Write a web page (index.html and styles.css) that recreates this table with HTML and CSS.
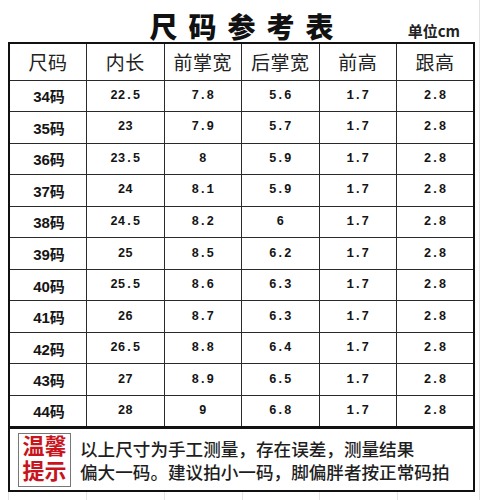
FILE: index.html
```html
<!DOCTYPE html>
<html lang="zh-CN">
<head>
<meta charset="utf-8">
<title>尺码参考表</title>
<link rel="stylesheet" href="styles.css">
</head>
<body>
<div class="page">
  <div class="sheet">
    <div class="title-bar">
      <span></span>
      <h1 class="title">尺码参考表</h1>
      <span class="unit">单位cm</span>
    </div>
    <table class="sizes">
      <thead>
        <tr><th>尺码</th><th>内长</th><th>前掌宽</th><th>后掌宽</th><th>前高</th><th>跟高</th></tr>
      </thead>
      <tbody>
        <tr><td class="size">34码</td><td>22.5</td><td>7.8</td><td>5.6</td><td>1.7</td><td>2.8</td></tr>
        <tr><td class="size">35码</td><td>23</td><td>7.9</td><td>5.7</td><td>1.7</td><td>2.8</td></tr>
        <tr><td class="size">36码</td><td>23.5</td><td>8</td><td>5.9</td><td>1.7</td><td>2.8</td></tr>
        <tr><td class="size">37码</td><td>24</td><td>8.1</td><td>5.9</td><td>1.7</td><td>2.8</td></tr>
        <tr><td class="size">38码</td><td>24.5</td><td>8.2</td><td>6</td><td>1.7</td><td>2.8</td></tr>
        <tr><td class="size">39码</td><td>25</td><td>8.5</td><td>6.2</td><td>1.7</td><td>2.8</td></tr>
        <tr><td class="size">40码</td><td>25.5</td><td>8.6</td><td>6.3</td><td>1.7</td><td>2.8</td></tr>
        <tr><td class="size">41码</td><td>26</td><td>8.7</td><td>6.3</td><td>1.7</td><td>2.8</td></tr>
        <tr><td class="size">42码</td><td>26.5</td><td>8.8</td><td>6.4</td><td>1.7</td><td>2.8</td></tr>
        <tr><td class="size">43码</td><td>27</td><td>8.9</td><td>6.5</td><td>1.7</td><td>2.8</td></tr>
        <tr><td class="size">44码</td><td>28</td><td>9</td><td>6.8</td><td>1.7</td><td>2.8</td></tr>
      </tbody>
    </table>
    <div class="notice">
      <div class="badge"><span class="badge-line">温馨</span><span class="badge-line">提示</span></div>
      <p class="notice-text">以上尺寸为手工测量，存在误差，测量结果<br>偏大一码。建议拍小一码，脚偏胖者按正常码拍</p>
    </div>
    <div class="ghost">
      <span></span><span></span><span></span><span></span><span></span><span></span>
    </div>
  </div>
</div>
</body>
</html>
```
FILE: styles.css
```css
html, body {
  margin: 0;
  padding: 0;
  background: #fff;
}

body {
  font-family: "Noto Sans CJK SC", "Noto Sans", sans-serif;
  color: #1a1a1a;
}

.page {
  width: 479px;
  height: 500px;
  border-right: 1px solid #e2e2e2;
  overflow: hidden;
}

.sheet {
  margin-left: 8px;
  width: 467px;
}

.title-bar {
  height: 42px;
  display: grid;
  grid-template-columns: 1fr auto 1fr;
  align-items: end;
}

.title {
  margin: 0 -11px 0 0;
  padding-bottom: 1px;
  font-size: 28px;
  line-height: 30px;
  font-weight: 900;
  letter-spacing: 11px;
  color: #111;
}

.unit {
  justify-self: end;
  padding-right: 15px;
  padding-bottom: 3px;
  font-size: 15px;
  line-height: 16px;
  font-weight: 700;
  color: #222;
}

.sizes {
  width: 467px;
  table-layout: fixed;
  border-collapse: collapse;
  border: 2px solid #111;
}

.sizes th,
.sizes td {
  border: 1px solid #2a2a2a;
  padding: 0;
  text-align: center;
  vertical-align: middle;
}

.sizes thead tr {
  height: 37px;
}

.sizes th {
  font-size: 19px;
  font-weight: 400;
  color: #222;
  letter-spacing: 0.5px;
}

.sizes tbody tr {
  height: 31.55px;
}

.sizes td {
  font-family: "Liberation Mono", "DejaVu Sans Mono", monospace;
  font-size: 12.5px;
  font-weight: 700;
  color: #151515;
}

.sizes td.size {
  font-family: "Liberation Sans", "Noto Sans CJK SC", sans-serif;
  font-size: 15px;
  font-weight: 700;
  padding-left: 2px;
}

.notice {
  box-sizing: border-box;
  height: 65px;
  margin-top: -1px;
  border: 2px solid #111;
  display: flex;
  align-items: center;
  gap: 9px;
  padding-left: 8px;
}

.badge {
  box-sizing: border-box;
  width: 53px;
  height: 54px;
  border: 1.5px solid #777;
  display: flex;
  flex-direction: column;
  justify-content: center;
  align-items: center;
  gap: 1px;
}

.badge-line {
  display: block;
  font-family: "Liberation Sans", "Noto Sans CJK SC", sans-serif;
  color: #c8141c;
  font-size: 22px;
  font-weight: 700;
  line-height: 24px;
}

.notice-text {
  margin: 0;
  font-size: 17.6px;
  line-height: 23px;
  font-weight: 500;
  color: #1e1e1e;
  white-space: nowrap;
}

.ghost {
  height: 12px;
  display: grid;
  grid-template-columns: repeat(6, 1fr);
}

.ghost span {
  border-left: 1px solid #e4e4e4;
}
```
